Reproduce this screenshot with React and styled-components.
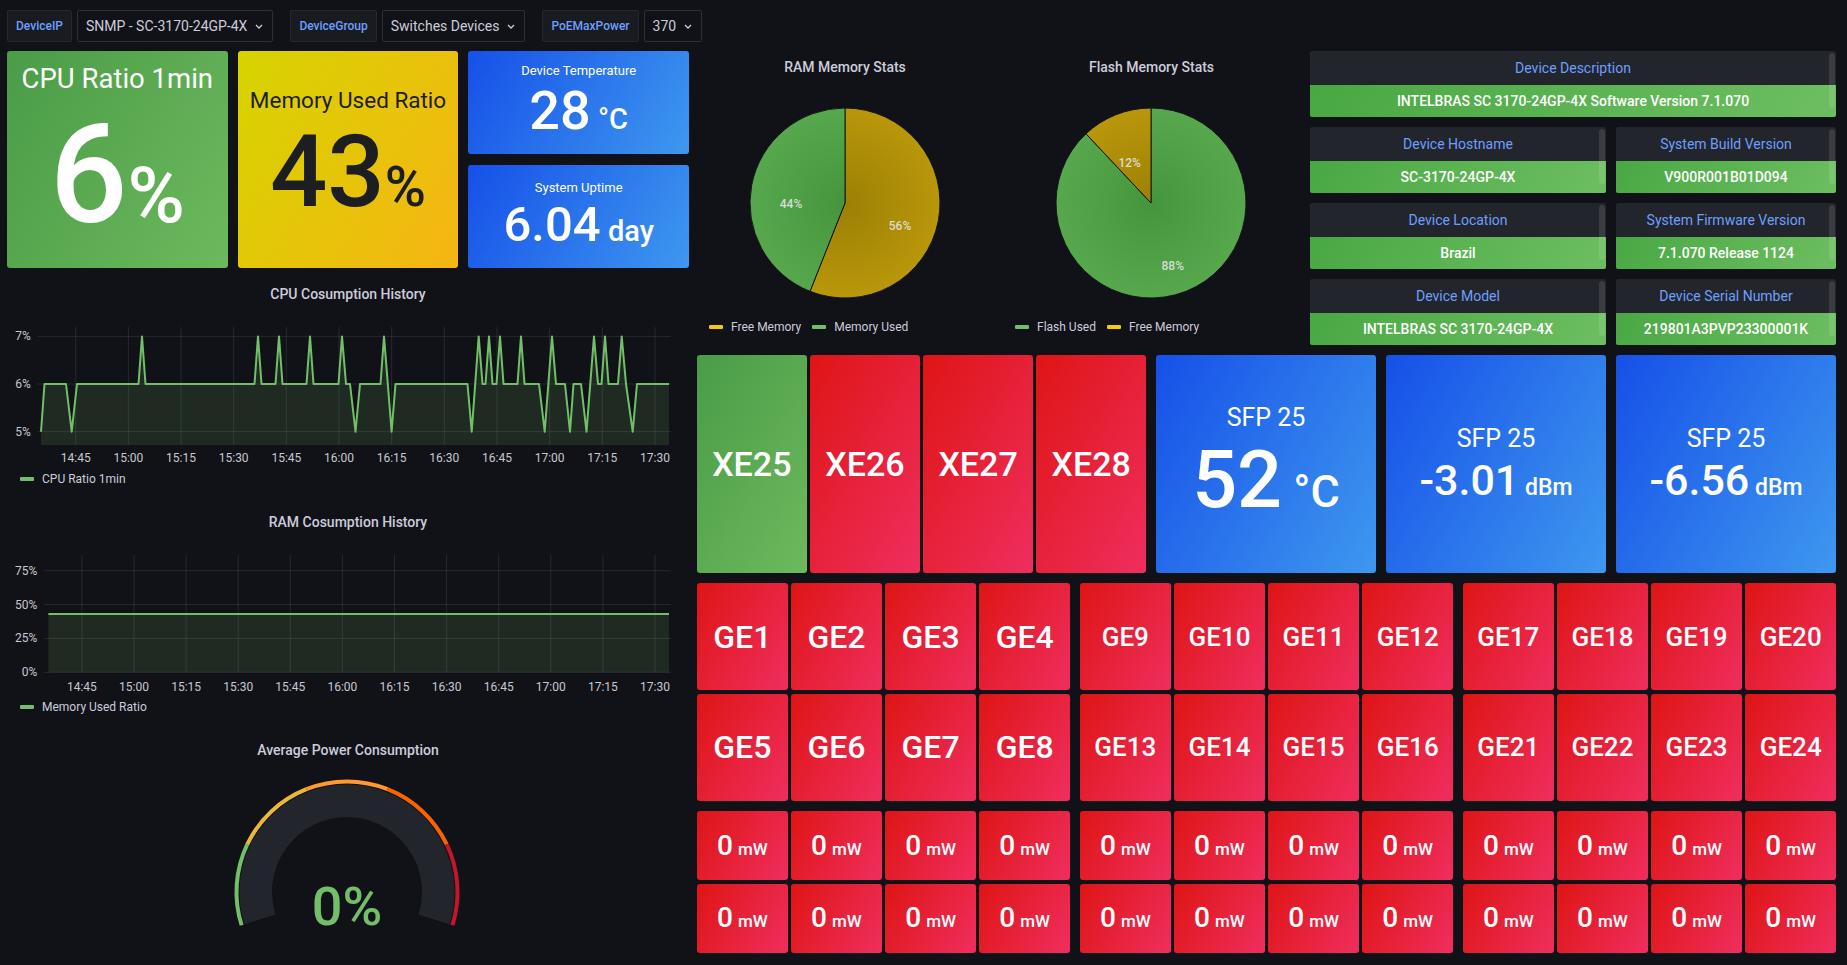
import React from 'react';
import styled, {createGlobalStyle} from 'styled-components';

const GlobalStyle = createGlobalStyle`
    html, body {
        margin: 0;
        padding: 0;
        background: #111217;
    }
    body {
        font-family: Roboto, "Noto Sans", "Liberation Sans", sans-serif;
        color: #ccccdc;
    }
    * {
        box-sizing: border-box;
    }
`

const gradients = {
    green: 'linear-gradient(120deg, #4a9c47, #6db95d)',
    yellow: 'linear-gradient(120deg, #d6d400, #f6b513)',
    blue: 'linear-gradient(120deg, #1650e8, #3e98ef)',
    red: 'linear-gradient(120deg, #de1515, #ef2e5e)',
}

const TIMES = ['14:45', '15:00', '15:15', '15:30', '15:45', '16:00', '16:15', '16:30', '16:45', '17:00', '17:15', '17:30']

// cpu series, [x in px, value in %], read off the original chart
const cpuPoints = [
    [41, 5], [44.5, 6],
    [66, 6], [71.7, 5], [77, 6],
    [138.5, 6], [142, 7], [145.5, 6],
    [254.5, 6], [258, 7], [261.5, 6],
    [275.5, 6], [279, 7], [282.5, 6],
    [306.5, 6], [310, 7], [313.5, 6],
    [338.5, 6], [342, 7], [346, 6],
    [350, 6], [355.5, 5], [360, 6],
    [380.5, 6], [384, 7], [391.6, 5], [395.5, 6],
    [467.5, 6], [471.7, 5], [478.7, 7], [482.5, 6],
    [485.5, 6], [489, 7], [492.5, 6],
    [496.5, 6], [500, 7], [503.5, 6],
    [517.5, 6], [521, 7], [524.5, 6],
    [539, 6], [544.7, 5], [552, 7], [556, 6],
    [565, 6], [570, 5], [573.5, 6],
    [581, 6], [586.5, 5], [594, 7], [598, 6],
    [601.5, 6], [605, 7], [608.5, 6],
    [618, 6], [621.7, 7], [626, 6], [632.7, 5], [637, 6],
    [669, 6],
]

const polar = (cx, cy, r, deg) => {
    const a = deg * Math.PI / 180
    return [cx + r * Math.sin(a), cy - r * Math.cos(a)]
}

const arcPath = (cx, cy, r, a0, a1) => {
    const [x0, y0] = polar(cx, cy, r, a0)
    const [x1, y1] = polar(cx, cy, r, a1)
    const large = a1 - a0 > 180 ? 1 : 0
    return `M${x0.toFixed(2)} ${y0.toFixed(2)} A${r} ${r} 0 ${large} 1 ${x1.toFixed(2)} ${y1.toFixed(2)}`
}

const slicePath = (cx, cy, r, a0, a1) => {
    const [x0, y0] = polar(cx, cy, r, a0)
    const [x1, y1] = polar(cx, cy, r, a1)
    const large = a1 - a0 > 180 ? 1 : 0
    return `M${cx} ${cy} L${x0.toFixed(2)} ${y0.toFixed(2)} A${r} ${r} 0 ${large} 1 ${x1.toFixed(2)} ${y1.toFixed(2)} Z`
}

/* ---------- layout ---------- */

const Page = styled.div`
    width: 1847px;
    height: 965px;
    overflow: hidden;
    padding: 10px 11px 0 7px;
`

const Bar = styled.div`
    display: flex;
    align-items: stretch;
    height: 32px;
    gap: 17px;
`

const VarGroup = styled.div`
    display: flex;
    gap: 5px;
`

const VarLabel = styled.div`
    display: flex;
    align-items: center;
    padding: 0 8px;
    background: #181b1f;
    border: 1px solid #25282e;
    border-radius: 2px;
    color: #6e9fff;
    font-size: 12px;
    font-weight: 500;
`

const VarSelect = styled.div`
    display: flex;
    align-items: center;
    gap: 8px;
    padding: 0 9px 0 8px;
    background: #111217;
    border: 1px solid #2c2f36;
    border-radius: 2px;
    color: #ccccdc;
    font-size: 14px;
    white-space: nowrap;
`

const Dashboard = styled.div`
    margin-top: 9px;
    display: grid;
    grid-template-columns: 682px 1139px;
    column-gap: 8px;
`

const Column = styled.div`
    display: flex;
    flex-direction: column;
    gap: 10px;
`

const StatRow = styled.div`
    display: grid;
    grid-template-columns: repeat(3, 1fr);
    column-gap: 10px;
    height: 217px;
`

const StackCol = styled.div`
    display: flex;
    flex-direction: column;
    gap: 11px;
`

/* ---------- stat tiles ---------- */

const Tile = styled.div`
    flex: 1;
    display: flex;
    flex-direction: column;
    align-items: center;
    justify-content: center;
    min-width: 0;
    border-radius: 3px;
    background: ${p => gradients[p.$tone]};
    color: ${p => p.$dark ? '#1d1e22' : '#ffffff'};
    padding-bottom: ${p => p.$lift || 0}px;
    white-space: nowrap;
`

const TileTitle = styled.div`
    font-size: ${p => p.$size}px;
    line-height: 1;
    margin-bottom: ${p => p.$gap}px;
`

const TileValue = styled.div`
    font-size: ${p => p.$size}px;
    line-height: 1;
    font-weight: 500;
`

const Unit = styled.span`
    font-size: ${p => p.$size}px;
`

const Stat = ({tone, dark, lift, title, titleSize, gap, value, size, unit, unitSize, spaced}) => (
    <Tile $tone={tone} $dark={dark} $lift={lift}>
        {title && <TileTitle $size={titleSize} $gap={gap}>{title}</TileTitle>}
        <TileValue $size={size}>
            {value}
            {unit && <Unit $size={unitSize}>{spaced ? ' ' : ''}{unit}</Unit>}
        </TileValue>
    </Tile>
)

/* ---------- panels ---------- */

const Panel = styled.div`
    display: flex;
    flex-direction: column;
    height: ${p => p.$h}px;
`

const PanelTitle = styled.div`
    height: 32px;
    flex: none;
    display: flex;
    align-items: center;
    justify-content: center;
    font-size: 14px;
    font-weight: 500;
    color: #ccccdc;
`

const ChartSvg = styled.svg`
    display: block;
    margin-top: ${p => p.$top || 0}px;
    flex: none;
    overflow: visible;
`

const Legend = styled.div`
    display: flex;
    align-items: center;
    height: 16px;
    margin-top: ${p => p.$top}px;
    padding-left: ${p => p.$left}px;
    font-size: 12px;
    color: #ccccdc;
`

const LegendItem = styled.div`
    display: flex;
    align-items: center;
    margin-right: 11px;
`

const Dash = styled.span`
    width: 14px;
    height: 4px;
    border-radius: 1px;
    margin-right: 8px;
    background: ${p => p.$color};
`

const AxisText = styled.text`
    font-size: 12px;
    fill: #c7c8d1;
`

const GridLine = styled.line`
    stroke: rgba(204, 204, 220, 0.12);
    stroke-width: 1;
`

const TimeAxis = ({start, step, y}) => TIMES.map((t, i) => (
    <AxisText key={t} x={start + i * step} y={y} textAnchor="middle">{t}</AxisText>
))

const CpuChart = () => {
    const yOf = v => 66 - (v - 6) * 47.65
    const pts = cpuPoints.map(([x, v]) => [x - 7, yOf(v)])
    const line = pts.map(([x, y], i) => `${i ? 'L' : 'M'}${x.toFixed(1)} ${y.toFixed(1)}`).join(' ')
    const fill = `${line} L${pts[pts.length - 1][0]} 127 L${pts[0][0]} 127 Z`
    const ticks = TIMES.map((_, i) => 68.7 + i * 52.66)

    return (
        <ChartSvg width="682" height="150" $top={8}>
            {ticks.map(x => <GridLine key={x} x1={x} x2={x} y1={9} y2={127} />)}
            {[7, 6, 5].map(v => <GridLine key={v} x1={30.4} x2={664} y1={yOf(v)} y2={yOf(v)} />)}
            {[7, 6, 5].map(v => (
                <AxisText key={v} x={23.8} y={yOf(v) + 4} textAnchor="end">{v}%</AxisText>
            ))}
            <path d={fill} fill="rgba(115, 191, 105, 0.14)" />
            <path d={line} fill="none" stroke="#73bf69" strokeWidth="2" strokeLinejoin="round" />
            <TimeAxis start={68.7} step={52.66} y={144} />
        </ChartSvg>
    )
}

const RamChart = () => {
    const yOf = p => 126.3 - p * 1.3547
    const ticks = TIMES.map((_, i) => 74.9 + i * 52.1)

    return (
        <ChartSvg width="682" height="150" $top={8}>
            {ticks.map(x => <GridLine key={x} x1={x} x2={x} y1={9} y2={126.3} />)}
            {[75, 50, 25, 0].map(p => <GridLine key={p} x1={37} x2={664} y1={yOf(p)} y2={yOf(p)} />)}
            {[75, 50, 25, 0].map(p => (
                <AxisText key={p} x={30.4} y={yOf(p) + 4} textAnchor="end">{p}%</AxisText>
            ))}
            <rect x={41.4} y={yOf(43)} width={620.6} height={yOf(0) - yOf(43)} fill="rgba(115, 191, 105, 0.14)" />
            <line x1={41.4} x2={662} y1={yOf(43)} y2={yOf(43)} stroke="#73bf69" strokeWidth="2" />
            <TimeAxis start={74.9} step={52.1} y={144.5} />
        </ChartSvg>
    )
}

const Gauge = () => {
    const cx = 340, cy = 118
    const bands = ['#73bf69', '#eab839', '#ff9830', '#fa6400', '#c4162a']
    const span = 215 / bands.length

    return (
        <ChartSvg width="682" height="170" $top={8}>
            <path d={arcPath(cx, cy, 91.25, -107.5, 107.5)} fill="none" stroke="#22252b" strokeWidth="32.5" />
            {bands.map((c, i) => (
                <path
                    key={c}
                    d={arcPath(cx, cy, 110.5, -107.5 + i * span, -107.5 + (i + 1) * span)}
                    fill="none"
                    stroke={c}
                    strokeWidth="4"
                />
            ))}
            <text x={cx} y={151} textAnchor="middle" fontSize="54" fontWeight="500" fill="#73bf69">0%</text>
        </ChartSvg>
    )
}

const PieLabel = styled.text`
    font-size: 12px;
    font-weight: 500;
    fill: rgba(230, 230, 236, 0.88);
`

const Pie = ({slices}) => {
    const cx = 148, cy = 100, r = 95
    return (
        <ChartSvg width="296" height="200" $top={20}>
            <defs>
                <radialGradient id="pieGreen" gradientUnits="userSpaceOnUse" cx={cx} cy={cy} r={r}>
                    <stop offset="0" stopColor="#46953c" />
                    <stop offset="1" stopColor="#57a84c" />
                </radialGradient>
                <radialGradient id="pieYellow" gradientUnits="userSpaceOnUse" cx={cx} cy={cy} r={r}>
                    <stop offset="0" stopColor="#9c8005" />
                    <stop offset="1" stopColor="#b9970b" />
                </radialGradient>
            </defs>
            {slices.map(s => (
                <path
                    key={s.label}
                    d={slicePath(cx, cy, r, s.from, s.to)}
                    fill={s.tone === 'green' ? 'url(#pieGreen)' : 'url(#pieYellow)'}
                    stroke="#15161a"
                    strokeWidth="1"
                />
            ))}
            {slices.map(s => (
                <PieLabel key={s.label + 'l'} x={s.lx} y={s.ly} textAnchor="middle" dominantBaseline="central">
                    {s.label}
                </PieLabel>
            ))}
        </ChartSvg>
    )
}

const legendColor = {green: '#73bf69', yellow: '#f2cc0c'}

const PiePanel = ({title, slices, legend}) => (
    <Panel $h={294}>
        <PanelTitle>{title}</PanelTitle>
        <Pie slices={slices} />
        <Legend $top={16} $left={12}>
            {legend.map(l => (
                <LegendItem key={l.name}>
                    <Dash $color={legendColor[l.tone]} />
                    {l.name}
                </LegendItem>
            ))}
        </Legend>
    </Panel>
)

/* ---------- info tables ---------- */

const TopSection = styled.div`
    display: grid;
    grid-template-columns: 296px 297px 526px;
    column-gap: 10px;
    height: 294px;
`

const InfoGrid = styled.div`
    display: grid;
    grid-template-columns: 296px 220px;
    grid-auto-rows: 66px;
    gap: 10px;
`

const InfoPanel = styled.div`
    position: relative;
    display: flex;
    flex-direction: column;
    grid-column: ${p => p.$wide ? '1 / span 2' : 'auto'};
    background: #22252b;
    border-radius: 2px;
    overflow: hidden;
`

const InfoHead = styled.div`
    height: 34px;
    display: flex;
    align-items: center;
    justify-content: center;
    color: #6e9fff;
    font-size: 14px;
`

const InfoValue = styled.div`
    height: 32px;
    display: flex;
    align-items: center;
    justify-content: center;
    background: linear-gradient(120deg, #49a843, #6dbe61);
    color: #ffffff;
    font-size: 14px;
    font-weight: 500;
    white-space: nowrap;
`

const ScrollThumb = styled.div`
    position: absolute;
    top: 2px;
    right: 1px;
    bottom: 9px;
    width: 6px;
    border-radius: 3px;
    background: rgba(255, 255, 255, 0.11);
`

const Info = ({title, value, wide}) => (
    <InfoPanel $wide={wide}>
        <InfoHead>{title}</InfoHead>
        <InfoValue>{value}</InfoValue>
        <ScrollThumb />
    </InfoPanel>
)

/* ---------- port grids ---------- */

const PortRow = styled.div`
    display: grid;
    grid-template-columns: ${p => p.$cols};
    column-gap: 10px;
    height: ${p => p.$h}px;
`

const PortGrid = styled.div`
    display: grid;
    grid-template-columns: repeat(4, 1fr);
    grid-auto-rows: 1fr;
    gap: 3.5px;
`

const Port = styled(Tile)`
    font-size: ${p => p.$size}px;
    font-weight: 500;
    line-height: 1;
`

const PowerUnit = styled.span`
    font-size: 17px;
    margin-left: 5px;
`

const geGroups = [
    {size: 32, names: ['GE1', 'GE2', 'GE3', 'GE4', 'GE5', 'GE6', 'GE7', 'GE8']},
    {size: 26, names: ['GE9', 'GE10', 'GE11', 'GE12', 'GE13', 'GE14', 'GE15', 'GE16']},
    {size: 26, names: ['GE17', 'GE18', 'GE19', 'GE20', 'GE21', 'GE22', 'GE23', 'GE24']},
]

const Chevron = () => (
    <svg width="8" height="5" viewBox="0 0 8 5">
        <path d="M1 1 L4 4 L7 1" fill="none" stroke="#ccccdc" strokeWidth="1.3" />
    </svg>
)

const Variable = ({label, value}) => (
    <VarGroup>
        <VarLabel>{label}</VarLabel>
        <VarSelect>{value}<Chevron /></VarSelect>
    </VarGroup>
)

export default function App() {
    return (
        <Page>
            <GlobalStyle />
            <Bar>
                <Variable label="DeviceIP" value="SNMP - SC-3170-24GP-4X" />
                <Variable label="DeviceGroup" value="Switches Devices" />
                <Variable label="PoEMaxPower" value="370" />
            </Bar>

            <Dashboard>
                <Column>
                    <StatRow>
                        <Stat tone="green" lift={10.5} title="CPU Ratio 1min" titleSize={27.5} gap={14}
                            value="6" size={137} unit="%" unitSize={78} />
                        <Stat tone="yellow" dark lift={8.7} title="Memory Used Ratio" titleSize={22.5} gap={9.25}
                            value="43" size={101} unit="%" unitSize={56} />
                        <StackCol>
                            <Stat tone="blue" lift={3.5} title="Device Temperature" titleSize={13} gap={7.5}
                                value="28" size={54} unit="°C" unitSize={29} spaced />
                            <Stat tone="blue" lift={3.5} title="System Uptime" titleSize={13} gap={6.5}
                                value="6.04" size={49} unit="day" unitSize={29} spaced />
                        </StackCol>
                    </StatRow>

                    <Panel $h={218}>
                        <PanelTitle>CPU Cosumption History</PanelTitle>
                        <CpuChart />
                        <Legend $top={3} $left={13}>
                            <LegendItem><Dash $color="#73bf69" />CPU Ratio 1min</LegendItem>
                        </Legend>
                    </Panel>

                    <Panel $h={218}>
                        <PanelTitle>RAM Cosumption History</PanelTitle>
                        <RamChart />
                        <Legend $top={3} $left={13}>
                            <LegendItem><Dash $color="#73bf69" />Memory Used Ratio</LegendItem>
                        </Legend>
                    </Panel>

                    <Panel $h={218}>
                        <PanelTitle>Average Power Consumption</PanelTitle>
                        <Gauge />
                    </Panel>
                </Column>

                <Column>
                    <TopSection>
                        <PiePanel
                            title="RAM Memory Stats"
                            slices={[
                                {label: '56%', tone: 'yellow', from: 0, to: 201.6, lx: 203, ly: 123},
                                {label: '44%', tone: 'green', from: 201.6, to: 360, lx: 94, ly: 100.5},
                            ]}
                            legend={[{name: 'Free Memory', tone: 'yellow'}, {name: 'Memory Used', tone: 'green'}]}
                        />
                        <PiePanel
                            title="Flash Memory Stats"
                            slices={[
                                {label: '88%', tone: 'green', from: 0, to: 316.8, lx: 169.8, ly: 162.5},
                                {label: '12%', tone: 'yellow', from: 316.8, to: 360, lx: 126.7, ly: 59.5},
                            ]}
                            legend={[{name: 'Flash Used', tone: 'green'}, {name: 'Free Memory', tone: 'yellow'}]}
                        />
                        <InfoGrid>
                            <Info wide title="Device Description" value="INTELBRAS SC 3170-24GP-4X Software Version 7.1.070" />
                            <Info title="Device Hostname" value="SC-3170-24GP-4X" />
                            <Info title="System Build Version" value="V900R001B01D094" />
                            <Info title="Device Location" value="Brazil" />
                            <Info title="System Firmware Version" value="7.1.070 Release 1124" />
                            <Info title="Device Model" value="INTELBRAS SC 3170-24GP-4X" />
                            <Info title="Device Serial Number" value="219801A3PVP23300001K" />
                        </InfoGrid>
                    </TopSection>

                    <PortRow $cols="449px 220px 220px 220px" $h={218}>
                        <PortGrid>
                            {['XE25', 'XE26', 'XE27', 'XE28'].map((n, i) => (
                                <Port key={n} $tone={i === 0 ? 'green' : 'red'} $size={34}>{n}</Port>
                            ))}
                        </PortGrid>
                        <Stat tone="blue" lift={4} title="SFP 25" titleSize={25} gap={11}
                            value="52" size={79} unit="°C" unitSize={45} spaced />
                        <Stat tone="blue" title="SFP 25" titleSize={25} gap={8.5}
                            value="-3.01" size={43} unit="dBm" unitSize={23} spaced />
                        <Stat tone="blue" title="SFP 25" titleSize={25} gap={8.5}
                            value="-6.56" size={43} unit="dBm" unitSize={23} spaced />
                    </PortRow>

                    <PortRow $cols="repeat(3, 1fr)" $h={218}>
                        {geGroups.map(g => (
                            <PortGrid key={g.names[0]}>
                                {g.names.map(n => <Port key={n} $tone="red" $size={g.size}>{n}</Port>)}
                            </PortGrid>
                        ))}
                    </PortRow>

                    <PortRow $cols="repeat(3, 1fr)" $h={142}>
                        {geGroups.map(g => (
                            <PortGrid key={g.names[0]}>
                                {g.names.map(n => (
                                    <Port key={n} $tone="red" $size={28}>
                                        <span>0<PowerUnit>mW</PowerUnit></span>
                                    </Port>
                                ))}
                            </PortGrid>
                        ))}
                    </PortRow>
                </Column>
            </Dashboard>
        </Page>
    )
}
